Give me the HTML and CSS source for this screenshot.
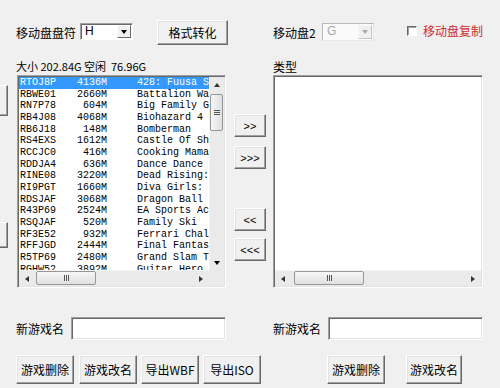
FILE: index.html
```html
<!DOCTYPE html>
<html lang="zh-CN">
<head>
  <meta charset="UTF-8">
  <title>WBFS 管理</title>
  <link rel="stylesheet" href="styles.css">
</head>
<body>
  <div class="window">
    <!-- buttons of the neighbouring panel, cut off by the window edge -->
    <div class="edge">
      <div class="stub stub-top"></div>
      <div class="stub stub-bottom"></div>
    </div>

    <div class="main">
      <!-- drive selection -->
      <div class="row toolbar">
        <span class="drive-label">移动盘盘符</span>
        <div class="select">
          <span class="select-value">H</span>
          <span class="select-btn"><i class="tri-down"></i></span>
        </div>
        <button class="btn btn-convert">格式转化</button>
        <span class="drive2-label">移动盘2</span>
        <div class="select disabled">
          <span class="select-value">G</span>
          <span class="select-btn"><i class="tri-down"></i></span>
        </div>
        <label class="check">
          <span class="check-box"></span>
          <span class="check-text">移动盘复制</span>
        </label>
      </div>

      <div class="row info">
        <span class="size-info">大小 202.84G 空闲&nbsp;&nbsp;76.96G</span>
        <span class="type-label">类型</span>
      </div>

      <!-- game lists -->
      <div class="row lists">
        <div class="listbox game-list">
          <div class="list-view">
            <div class="item selected"><span class="id">RTOJ8P</span><span class="size">4136M</span><span class="name">428: Fuusa Sareta Shibuya de</span></div>
            <div class="item"><span class="id">RBWE01</span><span class="size">2660M</span><span class="name">Battalion Wars 2</span></div>
            <div class="item"><span class="id">RN7P78</span><span class="size">604M</span><span class="name">Big Family Games</span></div>
            <div class="item"><span class="id">RB4J08</span><span class="size">4068M</span><span class="name">Biohazard 4 Wii</span></div>
            <div class="item"><span class="id">RB6J18</span><span class="size">148M</span><span class="name">Bomberman</span></div>
            <div class="item"><span class="id">RS4EXS</span><span class="size">1612M</span><span class="name">Castle Of Shikigami III</span></div>
            <div class="item"><span class="id">RCCJC0</span><span class="size">416M</span><span class="name">Cooking Mama</span></div>
            <div class="item"><span class="id">RDDJA4</span><span class="size">636M</span><span class="name">Dance Dance Revo</span></div>
            <div class="item"><span class="id">RINE08</span><span class="size">3220M</span><span class="name">Dead Rising: Chop Till You Drop</span></div>
            <div class="item"><span class="id">RI9PGT</span><span class="size">1660M</span><span class="name">Diva Girls: Divas on Ice</span></div>
            <div class="item"><span class="id">RDSJAF</span><span class="size">3068M</span><span class="name">Dragon Ball Z</span></div>
            <div class="item"><span class="id">R43P69</span><span class="size">2524M</span><span class="name">EA Sports Active</span></div>
            <div class="item"><span class="id">RSQJAF</span><span class="size">520M</span><span class="name">Family Ski</span></div>
            <div class="item"><span class="id">RF3E52</span><span class="size">932M</span><span class="name">Ferrari Challenge</span></div>
            <div class="item"><span class="id">RFFJGD</span><span class="size">2444M</span><span class="name">Final Fantasy</span></div>
            <div class="item"><span class="id">R5TP69</span><span class="size">2480M</span><span class="name">Grand Slam Tennis</span></div>
            <div class="item"><span class="id">RGHW52</span><span class="size">3892M</span><span class="name">Guitar Hero 5</span></div>
          </div>
          <div class="vscroll">
            <span class="sb-arrow"><i class="tri-up"></i></span>
            <span class="thumb v-thumb"><i class="grip-h"></i></span>
            <span class="sb-fill"></span>
            <span class="sb-arrow"><i class="tri-down"></i></span>
          </div>
          <div class="hscroll">
            <span class="sb-arrow"><i class="tri-left"></i></span>
            <span class="thumb h-thumb"><i class="grip-v"></i></span>
            <span class="sb-fill"></span>
            <span class="sb-arrow"><i class="tri-right"></i></span>
          </div>
          <div class="corner"></div>
        </div>

        <div class="move-buttons">
          <button class="btn btn-move">&gt;&gt;</button>
          <button class="btn btn-move">&gt;&gt;&gt;</button>
          <button class="btn btn-move gap">&lt;&lt;</button>
          <button class="btn btn-move">&lt;&lt;&lt;</button>
        </div>

        <div class="listbox type-list">
          <div class="list-view"></div>
          <div class="hscroll">
            <span class="sb-arrow"><i class="tri-left"></i></span>
            <span class="thumb h-thumb wide"><i class="grip-v"></i></span>
            <span class="sb-fill"></span>
            <span class="sb-arrow"><i class="tri-right"></i></span>
          </div>
        </div>
      </div>

      <!-- rename fields -->
      <div class="row names">
        <span class="name-label">新游戏名</span>
        <input class="field" type="text">
        <span class="name-label right">新游戏名</span>
        <input class="field" type="text">
      </div>

      <div class="row actions">
        <button class="btn btn-action">游戏删除</button>
        <button class="btn btn-action">游戏改名</button>
        <button class="btn btn-action">导出WBF</button>
        <button class="btn btn-action">导出ISO</button>
        <button class="btn btn-action right-first">游戏删除</button>
        <button class="btn btn-action right-second">游戏改名</button>
      </div>
    </div>
  </div>
</body>
</html>
```

FILE: styles.css
```css
body {
  margin: 0;
  padding: 0;
  background-color: #f0f0f0;
  font-family: "Noto Sans CJK SC", sans-serif;
  font-size: 12px;
  color: #000;
}

:root {
  --face: #f0f0f0;
  --light: #ffffff;
  --soft: #e3e3e3;
  --shadow: #a0a0a0;
  --dark: #696969;
  --select-blue: #3399ff;
}

.window {
  width: 500px;
  height: 388px;
  display: flex;
  overflow: hidden;
  background-color: var(--face);
}

/* left edge */
.edge {
  width: 16px;
  flex-shrink: 0;
  display: flex;
  flex-direction: column;
  padding-top: 85px;
  box-sizing: border-box;
}

.stub {
  width: 40px;
  margin-left: -32px;
  box-sizing: border-box;
  border: 1px solid;
  border-color: var(--light) var(--dark) var(--dark) var(--light);
  box-shadow: inset -1px -1px var(--shadow);
}

.stub-top {
  height: 31px;
}

.stub-bottom {
  height: 26px;
  margin-top: 106px;
}

.main {
  flex: 1;
  display: flex;
  flex-direction: column;
}

.row {
  display: flex;
  flex-shrink: 0;
}

/* buttons */
.btn {
  font-family: "Noto Sans CJK SC", sans-serif;
  font-size: 12px;
  line-height: 14px;
  color: #000;
  background-color: var(--face);
  box-sizing: border-box;
  border: 1px solid;
  border-color: var(--light) var(--dark) var(--dark) var(--light);
  box-shadow: inset -1px -1px var(--shadow), inset 1px 1px var(--soft);
  padding: 0;
  margin: 0;
  cursor: pointer;
}

/* toolbar */
.toolbar {
  margin-top: 20px;
  height: 25px;
  align-items: center;
}

.drive-label {
  width: 64px;
  line-height: 14px;
}

.select {
  width: 53px;
  height: 17px;
  box-sizing: border-box;
  display: flex;
  background-color: #fff;
  border: 1px solid;
  border-color: var(--shadow) var(--light) var(--light) var(--shadow);
  box-shadow: inset 1px 1px var(--dark);
  padding: 1px 1px 1px 2px;
  margin-top: -2px;
}

.select-value {
  flex: 1;
  font-family: "Liberation Sans", sans-serif;
  font-size: 12px;
  line-height: 13px;
  padding-left: 2px;
}

.select-btn {
  width: 14px;
  box-sizing: border-box;
  display: flex;
  align-items: center;
  justify-content: center;
  background-color: var(--face);
  border: 1px solid;
  border-color: var(--light) var(--dark) var(--dark) var(--light);
}

.select.disabled {
  width: 52px;
  height: 18px;
  background-color: #fafafa;
  border-color: #b9b9b9 #e8e8e8 #e8e8e8 #b9b9b9;
  box-shadow: none;
}

.select.disabled .select-value {
  color: #a8a8a8;
}

.select.disabled .select-btn {
  border-color: #f6f6f6 #c4c4c4 #c4c4c4 #f6f6f6;
}

.select.disabled .tri-down {
  border-top-color: #a8a8a8;
}

.btn-convert {
  width: 71px;
  height: 25px;
  margin-left: 24px;
}

.drive2-label {
  margin-left: 45px;
  width: 49px;
  line-height: 14px;
}

.check {
  display: flex;
  align-items: center;
  margin-left: 33px;
  margin-top: -3px;
}

.check-box {
  width: 10px;
  height: 10px;
  box-sizing: border-box;
  background-color: #fff;
  border: 1px solid;
  border-color: var(--dark) var(--light) var(--light) var(--dark);
  box-shadow: inset 1px 1px var(--shadow);
}

.check-text {
  margin-left: 6px;
  color: #d42a2a;
  line-height: 14px;
}

/* info line */
.info {
  margin-top: 15px;
  height: 13px;
  line-height: 13px;
}

.size-info {
  width: 257px;
  font-size: 11px;
}

/* lists */
.lists {
  margin-top: 2px;
  height: 213px;
}

.listbox {
  box-sizing: border-box;
  border: 1px solid;
  border-color: var(--shadow) var(--light) var(--light) var(--shadow);
  box-shadow: inset 1px 1px var(--dark), inset -1px -1px var(--soft);
  padding: 1px;
  background-color: #fff;
  display: grid;
}

.game-list {
  width: 209px;
  margin-left: 1px;
  grid-template-columns: 1fr 15px;
  grid-template-rows: 1fr 16px;
}

.type-list {
  width: 210px;
  grid-template-columns: 1fr;
  grid-template-rows: 1fr 16px;
}

.list-view {
  overflow: hidden;
  background-color: #fff;
}

.item {
  display: flex;
  height: 11.67px;
  line-height: 11.67px;
  font-family: "Liberation Mono", monospace;
  font-size: 10px;
  white-space: nowrap;
}

.item.selected {
  background-color: var(--select-blue);
  color: #fff;
}

.item .id {
  width: 41px;
  padding-left: 1px;
  box-sizing: border-box;
  flex-shrink: 0;
}

.item .size {
  width: 47px;
  text-align: right;
  flex-shrink: 0;
}

.item .name {
  flex: 1;
  min-width: 0;
  overflow: hidden;
  padding-left: 30px;
}

/* scrollbars */
.vscroll,
.hscroll {
  display: flex;
  background-color: #eaeaea;
}

.vscroll {
  flex-direction: column;
  border-left: 1px solid #f4f4f4;
}

.hscroll {
  border-top: 1px solid #f4f4f4;
}

.sb-arrow {
  width: 16px;
  height: 16px;
  flex-shrink: 0;
  display: flex;
  align-items: center;
  justify-content: center;
}

.vscroll .sb-arrow {
  width: auto;
}

.hscroll .sb-arrow {
  height: auto;
}

.sb-fill {
  flex: 1;
}

.thumb {
  box-sizing: border-box;
  border: 1px solid #979797;
  border-radius: 2px;
  background: linear-gradient(#f6f6f6, #e0e0e0);
  display: flex;
  align-items: center;
  justify-content: center;
}

.v-thumb {
  height: 37px;
  margin: 1px 1px 0 0;
  background: linear-gradient(90deg, #f6f6f6, #dedede);
}

.h-thumb {
  width: 60px;
  margin: 0 0 1px 1px;
}

.h-thumb.wide {
  width: 70px;
  margin-left: 3px;
}

.corner {
  background-color: #eaeaea;
}

.grip-h {
  width: 6px;
  height: 5px;
  background: repeating-linear-gradient(#555 0 1px, transparent 1px 2px);
}

.grip-v {
  width: 5px;
  height: 6px;
  background: repeating-linear-gradient(90deg, #555 0 1px, transparent 1px 2px);
}

.tri-up,
.tri-down,
.tri-left,
.tri-right {
  width: 0;
  height: 0;
  border: 3px solid transparent;
}

.tri-down {
  border-top: 4px solid #000;
  border-bottom: 0;
  margin-top: 1px;
}

.tri-up {
  border-bottom: 4px solid #333;
  border-top: 0;
}

.tri-left {
  border-right: 4px solid #333;
  border-left: 0;
}

.tri-right {
  border-left: 4px solid #333;
  border-right: 0;
}

/* move buttons */
.move-buttons {
  width: 47px;
  display: flex;
  flex-direction: column;
  padding: 39px 0 0 8px;
  box-sizing: border-box;
}

.btn-move {
  width: 32px;
  height: 23px;
  margin-bottom: 9px;
  font-family: "Liberation Sans", sans-serif;
  font-size: 11px;
}

.btn-move.gap {
  margin-top: 30px;
  margin-bottom: 7px;
}

/* rename fields */
.names {
  margin-top: 29px;
  height: 23px;
  align-items: center;
}

.name-label {
  width: 55px;
  line-height: 14px;
}

.name-label.right {
  margin-left: 47px;
}

.field {
  width: 155px;
  height: 23px;
  box-sizing: border-box;
  margin: 0;
  padding: 0 3px;
  background-color: #fff;
  border: 1px solid;
  border-color: var(--shadow) var(--light) var(--light) var(--shadow);
  box-shadow: inset 1px 1px var(--dark), inset -1px -1px var(--soft);
  outline: none;
}

/* action buttons */
.actions {
  margin-top: 15px;
  height: 29px;
}

.btn-action {
  width: 58px;
  height: 29px;
  margin-right: 4px;
}

.btn-action:first-child {
  margin-right: 5px;
}

.btn-action.right-first {
  margin-left: 62px;
  margin-right: 21px;
}

.btn-action.right-second {
  width: 56px;
}
```
